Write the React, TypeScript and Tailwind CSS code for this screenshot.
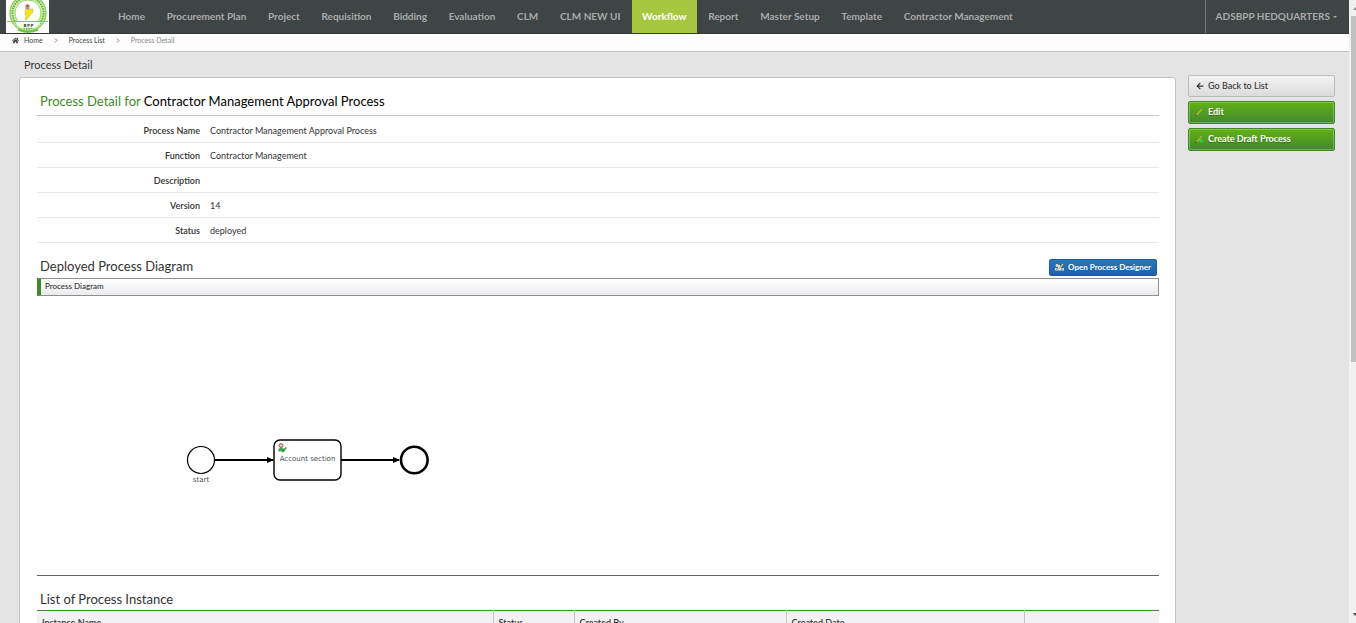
import { FaArrowLeft, FaHome } from "react-icons/fa";

const navItems = [
  "Home",
  "Procurement Plan",
  "Project",
  "Requisition",
  "Bidding",
  "Evaluation",
  "CLM",
  "CLM NEW UI",
  "Workflow",
  "Report",
  "Master Setup",
  "Template",
  "Contractor Management",
];

const details = [
  ["Process Name", "Contractor Management Approval Process"],
  ["Function", "Contractor Management"],
  ["Description", ""],
  ["Version", "14"],
  ["Status", "deployed"],
];

function Logo() {
  return (
    <svg viewBox="0 0 43 33" className="h-[33px] w-[43px] shrink-0" role="img" aria-label="BPP">
      <rect width="43" height="33" fill="#fff" />
      <circle cx="22" cy="13" r="18" fill="#d8f0b4" stroke="#8fd05a" strokeWidth="1.4" />
      <circle cx="22" cy="13" r="15.6" fill="none" stroke="#5aaf4c" strokeWidth="2" strokeDasharray="1.6 0.9" />
      <circle cx="22" cy="13" r="13" fill="#fff" stroke="#8fd05a" strokeWidth="0.9" />
      <path d="M9 22.2h26c-2 3-4 5-6 5.800h-14c-2.500-.8-4.500-2.800-6-5.800z" fill="#f4fbe9" />
      <path d="M1 21.500h41" stroke="#86c95c" strokeWidth="1" />
      <path d="M12 29.500c4 2 7 2.300 10 2.300s6-.3 10-2.300" fill="none" stroke="#6cc04a" strokeWidth="2.200" />
      <path d="M19.500 9h7.500l-.5 4-2 1.500-2 3-2.500 2.500-1-1 1.500-3-1.500-2z" fill="#f2e51c" stroke="#b9a916" strokeWidth="0.5" />
      <path d="M19.500 5h4v4h-4z" fill="#b98c8c" />
      <path d="M20.500 4.500h2v2h-2z" fill="#a63c3c" />
      <text x="22.500" y="26.500" textAnchor="middle" fontSize="4" fontWeight="900" fontFamily="Lato, sans-serif" fill="#222">
        B P P
      </text>
    </svg>
  );
}

function Pencil({ add = false }: { add?: boolean }) {
  return (
    <svg viewBox="0 0 10 10" className="size-[10px] shrink-0" aria-hidden="true">
      <path d="M2.500 8L7 3.200" stroke="#d9b430" strokeWidth="1.100" />
      <path d="M7 3.200l.8-.8" stroke="#e9a79c" strokeWidth="1.200" />
      <path d="M1.500 9l1-1" stroke="#5b4a1c" strokeWidth="1.100" />
      {add && <path d="M7 4.500v4.500M4.800 6.800h4.400" stroke="#35d048" strokeWidth="1.400" />}
    </svg>
  );
}

function Chevron() {
  return (
    <span className="flex w-[26px] justify-center">
      <svg viewBox="0 0 4 5" className="h-[5px] w-1" aria-hidden="true">
        <path d="M1 .5l2 2-2 2" fill="none" stroke="#777" strokeWidth="0.9" />
      </svg>
    </span>
  );
}

function DesignerIcon() {
  return (
    <svg viewBox="0 0 9 8" className="h-2 w-[9px] shrink-0" aria-hidden="true">
      <path d="M0 7.500V5h3V2h2v3h4v2.500z" fill="#cfe0ee" />
      <circle cx="2" cy="2.500" r="1.400" fill="#e9dcc0" />
      <path d="M4 6l4-5" stroke="#e8c348" strokeWidth="1.300" />
      <path d="M1 6h2M6 6h2" stroke="#5d86a8" />
    </svg>
  );
}

function ProcessDiagram() {
  return (
    <svg viewBox="0 0 420 279" className="block h-[279px] w-[420px]" role="img" aria-label="start, Account section, end">
      <g stroke="#000" fill="#fff">
        <path d="M178 164h58M304 164h58" strokeWidth="1.800" />
        <path d="M230 161l7 3-7 3zM356 161l7 3-7 3z" fill="#000" stroke="none" />
        <circle cx="164" cy="164" r="13.500" strokeWidth="1.200" />
        <rect x="237" y="144" width="67" height="40" rx="6" strokeWidth="1.400" />
        <circle cx="377.300" cy="164" r="13.300" strokeWidth="2.600" />
      </g>
      <circle cx="244" cy="149.500" r="2" fill="#f1c6a8" stroke="#7b4a32" strokeWidth="0.8" />
      <path d="M241.500 155c0-2.500 1.500-3 3-3s3 .8 3 3z" fill="#54ad5c" stroke="#2f7d3c" strokeWidth="0.5" />
      <path d="M244 153.500l1.800 2 3.500-4" fill="none" stroke="#27a83a" strokeWidth="1.500" />
      <g fontFamily="'DejaVu Sans', sans-serif" fontSize="7" fill="#4a4f57" textAnchor="middle">
        <text x="270.500" y="165">Account section</text>
        <text x="164" y="186">start</text>
      </g>
    </svg>
  );
}

const greenButton =
  "flex h-[23px] w-full items-center gap-1 rounded-[2px] border border-[#3d8b22] bg-linear-to-b from-[#62b10f] to-[#41892c] px-[5px] pb-[2px] text-left text-[9px] font-bold text-white inset-ring inset-ring-white/25 text-shadow-[0_1px_1px_rgb(0_0_0/0.3)]";

export default function App() {
  return (
    <div className="flex h-screen overflow-hidden bg-[#e4e4e4] font-['Lato',sans-serif] text-[#333]">
      <div className="min-w-0 flex-1">
        <header className="flex h-[34px] items-start border-b border-[#353938] bg-[#3f4444] pl-[6px]">
          <Logo />
          <nav className="ml-[59px] flex max-w-[915px] flex-1 justify-between text-[10px] font-bold whitespace-nowrap text-[#a9abab]">
            {navItems.map((item) => (
              <a
                key={item}
                href="#"
                className={
                  item === "Workflow"
                    ? "flex h-[33px] items-center bg-[#a6c840] px-[10px] text-white"
                    : "flex h-[33px] items-center px-[10px]"
                }
              >
                {item}
              </a>
            ))}
          </nav>
          <button className="ml-auto flex h-[33px] items-center gap-[3px] border-l border-[#777b7b] pr-3 pl-[10px] text-[10px] font-bold whitespace-nowrap text-[#a9abab]">
            ADSBPP HEDQUARTERS
            <svg viewBox="0 0 4 2" className="h-[2px] w-1" aria-hidden="true">
              <path d="M0 0h4L2 2z" fill="#a9abab" />
            </svg>
          </button>
        </header>

        <nav aria-label="Breadcrumb" className="flex h-[18px] items-center border-b border-[#c0c0c0] bg-[#fdfdfd] pb-[4px] pl-3 text-[7px] text-[#444]">
          <FaHome className="mr-[5px] size-[7px]" />
          <a href="#">Home</a>
          <Chevron />
          <a href="#">Process List</a>
          <Chevron />
          <span className="text-[#888]">Process Detail</span>
        </nav>

        <div className="flex pr-[14px] pl-[19px]">
          <main className="min-w-0 flex-1">
            <h1 className="flex h-[25px] items-center pl-[5px] text-[11px] leading-4">Process Detail</h1>
            <section className="min-h-[640px] rounded-t-[3px] border border-[#c4c4c4] bg-white pr-4 pl-[17px]">
              <h2 className="flex h-[38px] items-center gap-[3px] border-b border-[#c8c8c8] pt-[9px] pl-[3px] text-[13px] leading-4 text-black">
                <span className="text-[#3f8a2a]">Process Detail for</span>
                <span>Contractor Management Approval Process</span>
              </h2>
              <dl className="pt-[2px] text-[9px]">
                {details.map(([label, value]) => (
                  <div key={label} className="flex h-[25px] items-center border-b border-[#e8e8e8] pt-px">
                    <dt className="w-[163px] text-right font-semibold">{label}</dt>
                    <dd className="pl-[10px]">{value}</dd>
                  </div>
                ))}
              </dl>
              <div className="flex h-[35px] items-end justify-between pr-[2px] pb-[2px] pl-[3px]">
                <h2 className="text-[13px] leading-5">Deployed Process Diagram</h2>
                <button className="flex h-[17px] items-center gap-1 rounded-[2px] border border-[#1f5c9e] bg-linear-to-b from-[#2577bb] to-[#2260a9] px-[5px] pb-px text-[8px] font-bold text-white">
                  <DesignerIcon />
                  Open Process Designer
                </button>
              </div>
              <h3 className="flex h-[18px] items-center border border-l-4 border-[#8e8e8e] border-l-[#3f8a2a] bg-linear-to-b from-white to-[#ebebee] pb-[2px] pl-1 text-[8px] font-medium">
                Process Diagram
              </h3>
              <div className="border-b border-[#666]">
                <ProcessDiagram />
              </div>
              <h2 className="pt-[13px] pb-[1px] pl-[3px] text-[13px] leading-5">List of Process Instance</h2>
              <table className="w-full table-fixed border-t border-[#3f8a2a] bg-[#f2f2f4] text-[9px]">
                <thead>
                  <tr className="h-6 text-left">
                    <th className="border-r border-[#c4c4c4] pl-[5px] font-semibold">Instance Name</th>
                    <th className="w-[81px] border-r border-[#c4c4c4] pl-[5px] font-semibold">Status</th>
                    <th className="w-[212px] border-r border-[#c4c4c4] pl-[5px] font-semibold">Created By</th>
                    <th className="w-[238px] border-r border-[#c4c4c4] pl-[5px] font-semibold">Created Date</th>
                    <th className="w-[135px]" aria-label="Actions" />
                  </tr>
                </thead>
              </table>
            </section>
          </main>

          <aside className="ml-3 flex w-[147px] flex-col gap-[4px] pt-[23px]">
            <button className="flex h-[22px] w-full items-center gap-1 rounded-[2px] border border-[#bcbcbc] bg-linear-to-b from-[#f3f3f3] to-[#dcdcdc] px-[7px] pb-px text-left text-[9px] font-medium text-[#333]">
              <FaArrowLeft className="size-2" />
              Go Back to List
            </button>
            <button className={greenButton}>
              <Pencil />
              Edit
            </button>
            <button className={greenButton}>
              <Pencil add />
              Create Draft Process
            </button>
          </aside>
        </div>
      </div>

      <div className="flex w-[7px] shrink-0 flex-col justify-between bg-[#f1f1f1] pl-[2px]" aria-hidden="true">
        <div className="relative h-[362px] pt-4">
          <svg viewBox="0 0 5 12" className="absolute top-0 left-0 h-3 w-[5px]">
            <path d="M2 10h4V6z" fill="#8a8a8a" />
          </svg>
          <div className="h-full bg-[#c1c1c1]" />
        </div>
        <svg viewBox="0 0 5 12" className="h-3 w-[5px]">
          <path d="M2 2h4v1L4 5z" fill="#505050" />
        </svg>
      </div>
    </div>
  );
}
